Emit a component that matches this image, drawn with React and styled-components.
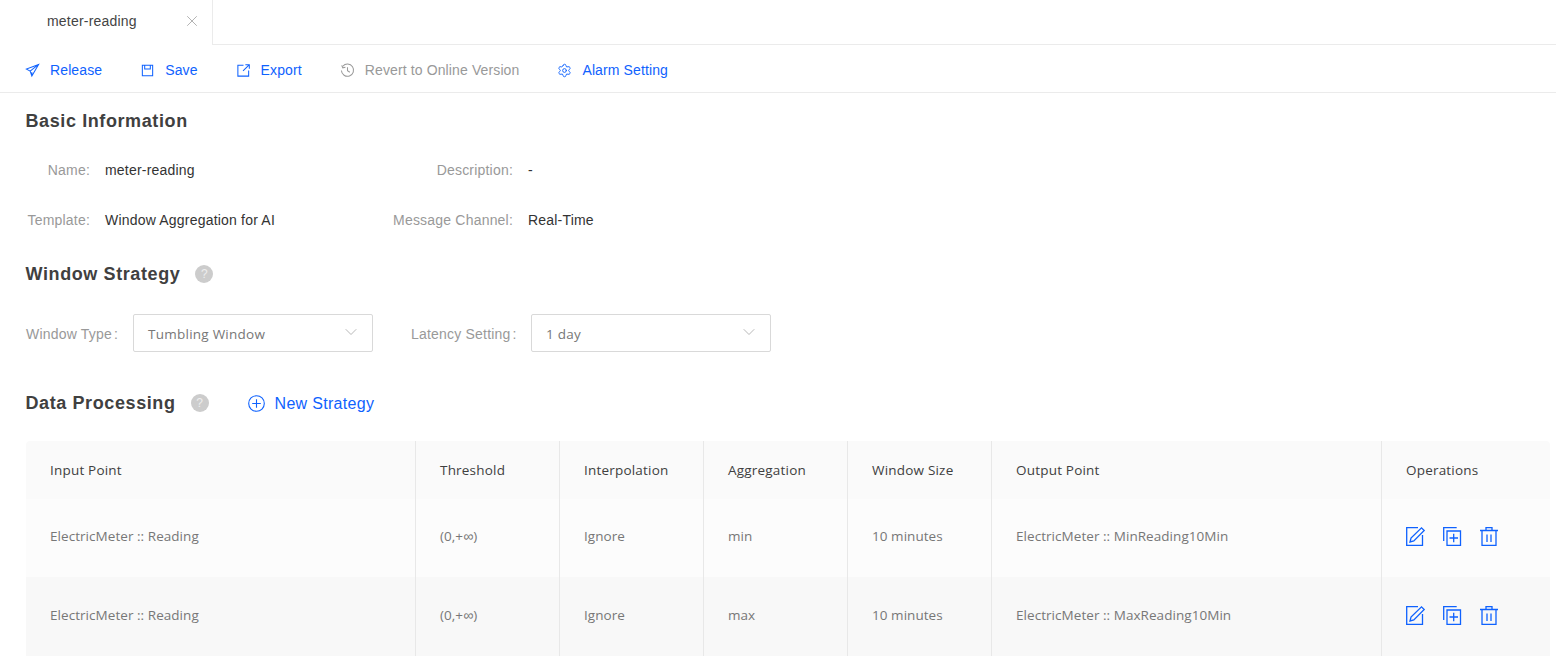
import styled, { createGlobalStyle } from 'styled-components'
import { ChevronDown, Settings, X } from 'lucide-react'

const primaryBlue = '#0f62fe'
const columns = '390px 144px 144px 144px 144px 390px 168px'

const GlobalStyle = createGlobalStyle`
    html, body {
        margin: 0;
        padding: 0;
        background: #fff;
        font-family: "Liberation Sans", Arial, sans-serif;
        font-size: 14px;
        letter-spacing: 0.2px;
    }
`

const Page = styled.div`
    width: 1556px;
    height: 662px;
    overflow: hidden;
`

const TabBar = styled.div`
    display: flex;
    height: 44px;
    border-bottom: 1px solid #ebebeb;
`

const Tab = styled.div`
    width: 213px;
    height: 45px;
    box-sizing: border-box;
    padding: 0 11px 4px 47px;
    display: flex;
    align-items: center;
    justify-content: space-between;
    border-right: 1px solid #ebebeb;
    background: #fff;
    color: #444;
    svg {
        color: #999;
    }
`

const Toolbar = styled.div`
    display: flex;
    align-items: center;
    gap: 38px;
    height: 48px;
    padding: 3px 0 0 25px;
    box-sizing: border-box;
    border-bottom: 1px solid #ebebeb;
    letter-spacing: 0.12px;
`

const ToolButton = styled.div`
    display: flex;
    align-items: center;
    gap: 10px;
    color: ${({ $disabled }) => ($disabled ? '#999' : primaryBlue)};
    svg {
        width: 15px;
        height: 15px;
    }
`

const Content = styled.div`
    padding: 0 6px 0 26px;
`

const SectionTitle = styled.h2`
    margin: 0 0 0 -0.5px;
    font-size: 18px;
    line-height: 24px;
    font-weight: 700;
    letter-spacing: 0.6px;
    color: #404040;
`

const SectionRow = styled.div`
    display: flex;
    align-items: center;
    height: 24px;
    margin-top: ${({ $top }) => $top}px;
`

const Help = styled.span`
    width: 18px;
    height: 18px;
    margin-left: 15px;
    border-radius: 50%;
    background: #ccc;
    color: #eee;
    font-size: 12px;
    line-height: 18px;
    text-align: center;
`

const InfoGrid = styled.div`
    display: grid;
    grid-template-columns: 64px 273px 120px auto;
    grid-auto-rows: 50px;
    column-gap: 15px;
    justify-content: start;
    align-items: center;
    margin-top: 12px;
`

const InfoLabel = styled.span`
    color: #999;
    text-align: right;
    white-space: nowrap;
`

const InfoValue = styled.span`
    color: #333;
`

const FormRow = styled.div`
    display: flex;
    align-items: center;
    margin-top: 28px;
`

const FormLabel = styled.span`
    color: #999;
    margin: ${({ $left }) => `2px 15px 0 ${$left}px`};
    width: ${({ $width }) => $width}px;
    white-space: nowrap;
    i {
        font-style: normal;
        margin-left: 2px;
    }
`

const Select = styled.div`
    width: 240px;
    height: 38px;
    box-sizing: border-box;
    border: 1px solid #d9d9d9;
    border-radius: 2px;
    padding: 0 11px 0 14px;
    display: flex;
    align-items: center;
    justify-content: space-between;
    font-family: "Open Sans", sans-serif;
    font-size: 13.5px;
    letter-spacing: 0.25px;
    color: #777;
    span {
        padding-top: 2px;
    }
    svg {
        color: #aaa;
        margin-top: -3px;
    }
`

const NewStrategy = styled.div`
    display: flex;
    align-items: center;
    gap: 10px;
    margin: 1px 0 0 39px;
    color: ${primaryBlue};
    font-size: 16px;
    letter-spacing: 0.3px;
`

const Table = styled.div`
    margin-top: 26px;
    width: 1524px;
    border-radius: 4px 4px 0 0;
    overflow: hidden;
    font-family: "Open Sans", sans-serif;
    font-size: 13.5px;
    letter-spacing: 0.05px;
`

const Row = styled.div`
    display: grid;
    grid-template-columns: ${columns};
    height: ${({ $height }) => $height}px;
    background: ${({ $bg }) => $bg};
    color: ${({ $head }) => ($head ? '#404040' : '#777')};
    font-weight: ${({ $head }) => ($head ? 500 : 400)};
    letter-spacing: ${({ $head }) => ($head ? '0.2px' : 'inherit')};
`

const Cell = styled.div`
    display: flex;
    align-items: center;
    gap: 17px;
    padding: 0 0 ${({ $head }) => ($head ? 0 : 4)}px 24px;
    box-sizing: border-box;
    border-right: 1px solid #e8e8e8;
    white-space: nowrap;
    &:last-child {
        border-right: none;
    }
`

const Infinity = styled.span`
    font-family: "Liberation Sans", sans-serif;
    font-size: 14px;
`

const OpIcon = styled.svg`
    width: 20px;
    height: 20px;
    flex: none;
    fill: none;
    stroke: ${primaryBlue};
    stroke-width: 1.3;
`

const ReleaseIcon = () => (
    <svg viewBox="0 0 16 16" fill="none" stroke="currentColor" strokeWidth="1.1">
        <path d="M14.5 1.5 1.5 6.5l4 2.2 1.8 5.3 7.2-12.5ZM5.5 8.700l9-7.200M7.300 14V9.800" />
    </svg>
)

const SaveIcon = () => (
    <svg viewBox="0 0 16 16" fill="none" stroke="currentColor" strokeWidth="1.1">
        <path d="M2.500 2.500h11v11h-11zM5 2.500v4h6v-4" />
    </svg>
)

const ExportIcon = () => (
    <svg viewBox="0 0 16 16" fill="none" stroke="currentColor" strokeWidth="1.1">
        <path d="M8 2.500H2v11.500h11.500V8M7.500 8.500l6.500-6.500M10 1.800h4.200V6" />
    </svg>
)

const HistoryIcon = () => (
    <svg viewBox="0 0 16 16" fill="none" stroke="currentColor" strokeWidth="1.1">
        <path d="M3 3.500A6.500 6.500 0 1 1 1.500 8M1.800 2.500 3 5.200l2.800-.6M8 4.500V8.300l2.500 1.500" />
    </svg>
)

const PlusCircle = () => (
    <svg width="17" height="17" viewBox="0 0 17 17" fill="none" stroke="currentColor" strokeWidth="1.1">
        <circle cx="8.500" cy="8.500" r="7.800" />
        <path d="M8.500 4.200v8.600M4.200 8.500h8.600" />
    </svg>
)

const EditIcon = () => (
    <OpIcon viewBox="0 -1 20 20">
        <path d="M12 .7H.7v17.600h15.800V8" />
        <path d="M4 15l1-4L15.500 .8l2.700 2.700L7.800 14 4 15Z" />
    </OpIcon>
)

const CopyIcon = () => (
    <OpIcon viewBox="0 -1 20 20">
        <path d="M.7 14V.7h13" />
        <path d="M4 4h13.500v14.300H4zM10.700 6.800v8.500M6.500 11h8.500" />
    </OpIcon>
)

const TrashIcon = () => (
    <OpIcon viewBox="0 -1 20 20">
        <path d="M0 3.500h18M6 3.500V.7h6v2.800M2 3.500v14.800h14V3.500M7 7.500v7.500M11 7.500v7.500" />
    </OpIcon>
)

const heads = ['Input Point', 'Threshold', 'Interpolation', 'Aggregation', 'Window Size', 'Output Point', 'Operations']

const rows = [
    { agg: 'min', output: 'ElectricMeter :: MinReading10Min', bg: '#fcfcfc', height: 78 },
    { agg: 'max', output: 'ElectricMeter :: MaxReading10Min', bg: '#f8f8f8', height: 79 },
]

const App = () => (
    <Page>
        <GlobalStyle />
        <TabBar>
            <Tab>
                <span>meter-reading</span>
                <X size={18} strokeWidth={1} />
            </Tab>
        </TabBar>
        <Toolbar>
            <ToolButton><ReleaseIcon />Release</ToolButton>
            <ToolButton><SaveIcon />Save</ToolButton>
            <ToolButton><ExportIcon />Export</ToolButton>
            <ToolButton $disabled><HistoryIcon />Revert to Online Version</ToolButton>
            <ToolButton><Settings strokeWidth={1.5} />Alarm Setting</ToolButton>
        </Toolbar>
        <Content>
            <SectionRow $top={16}>
                <SectionTitle>Basic Information</SectionTitle>
            </SectionRow>
            <InfoGrid>
                <InfoLabel>Name:</InfoLabel>
                <InfoValue>meter-reading</InfoValue>
                <InfoLabel>Description:</InfoLabel>
                <InfoValue>-</InfoValue>
                <InfoLabel>Template:</InfoLabel>
                <InfoValue>Window Aggregation for AI</InfoValue>
                <InfoLabel>Message Channel:</InfoLabel>
                <InfoValue>Real-Time</InfoValue>
            </InfoGrid>
            <SectionRow $top={17}>
                <SectionTitle>Window Strategy</SectionTitle>
                <Help>?</Help>
            </SectionRow>
            <FormRow>
                <FormLabel $left={0} $width={92}>Window Type<i>:</i></FormLabel>
                <Select><span>Tumbling Window</span><ChevronDown size={20} strokeWidth={1} /></Select>
                <FormLabel $left={38} $width={105}>Latency Setting<i>:</i></FormLabel>
                <Select><span>1 day</span><ChevronDown size={20} strokeWidth={1} /></Select>
            </FormRow>
            <SectionRow $top={39}>
                <SectionTitle>Data Processing</SectionTitle>
                <Help>?</Help>
                <NewStrategy><PlusCircle />New Strategy</NewStrategy>
            </SectionRow>
            <Table>
                <Row $head $height={58} $bg="#fafafa">
                    {heads.map(h => <Cell key={h} $head>{h}</Cell>)}
                </Row>
                {rows.map(r => (
                    <Row key={r.agg} $height={r.height} $bg={r.bg}>
                        <Cell>ElectricMeter :: Reading</Cell>
                        <Cell><span>(0,+<Infinity>∞</Infinity>)</span></Cell>
                        <Cell>Ignore</Cell>
                        <Cell>{r.agg}</Cell>
                        <Cell>10 minutes</Cell>
                        <Cell>{r.output}</Cell>
                        <Cell><EditIcon /><CopyIcon /><TrashIcon /></Cell>
                    </Row>
                ))}
            </Table>
        </Content>
    </Page>
)

export default App
